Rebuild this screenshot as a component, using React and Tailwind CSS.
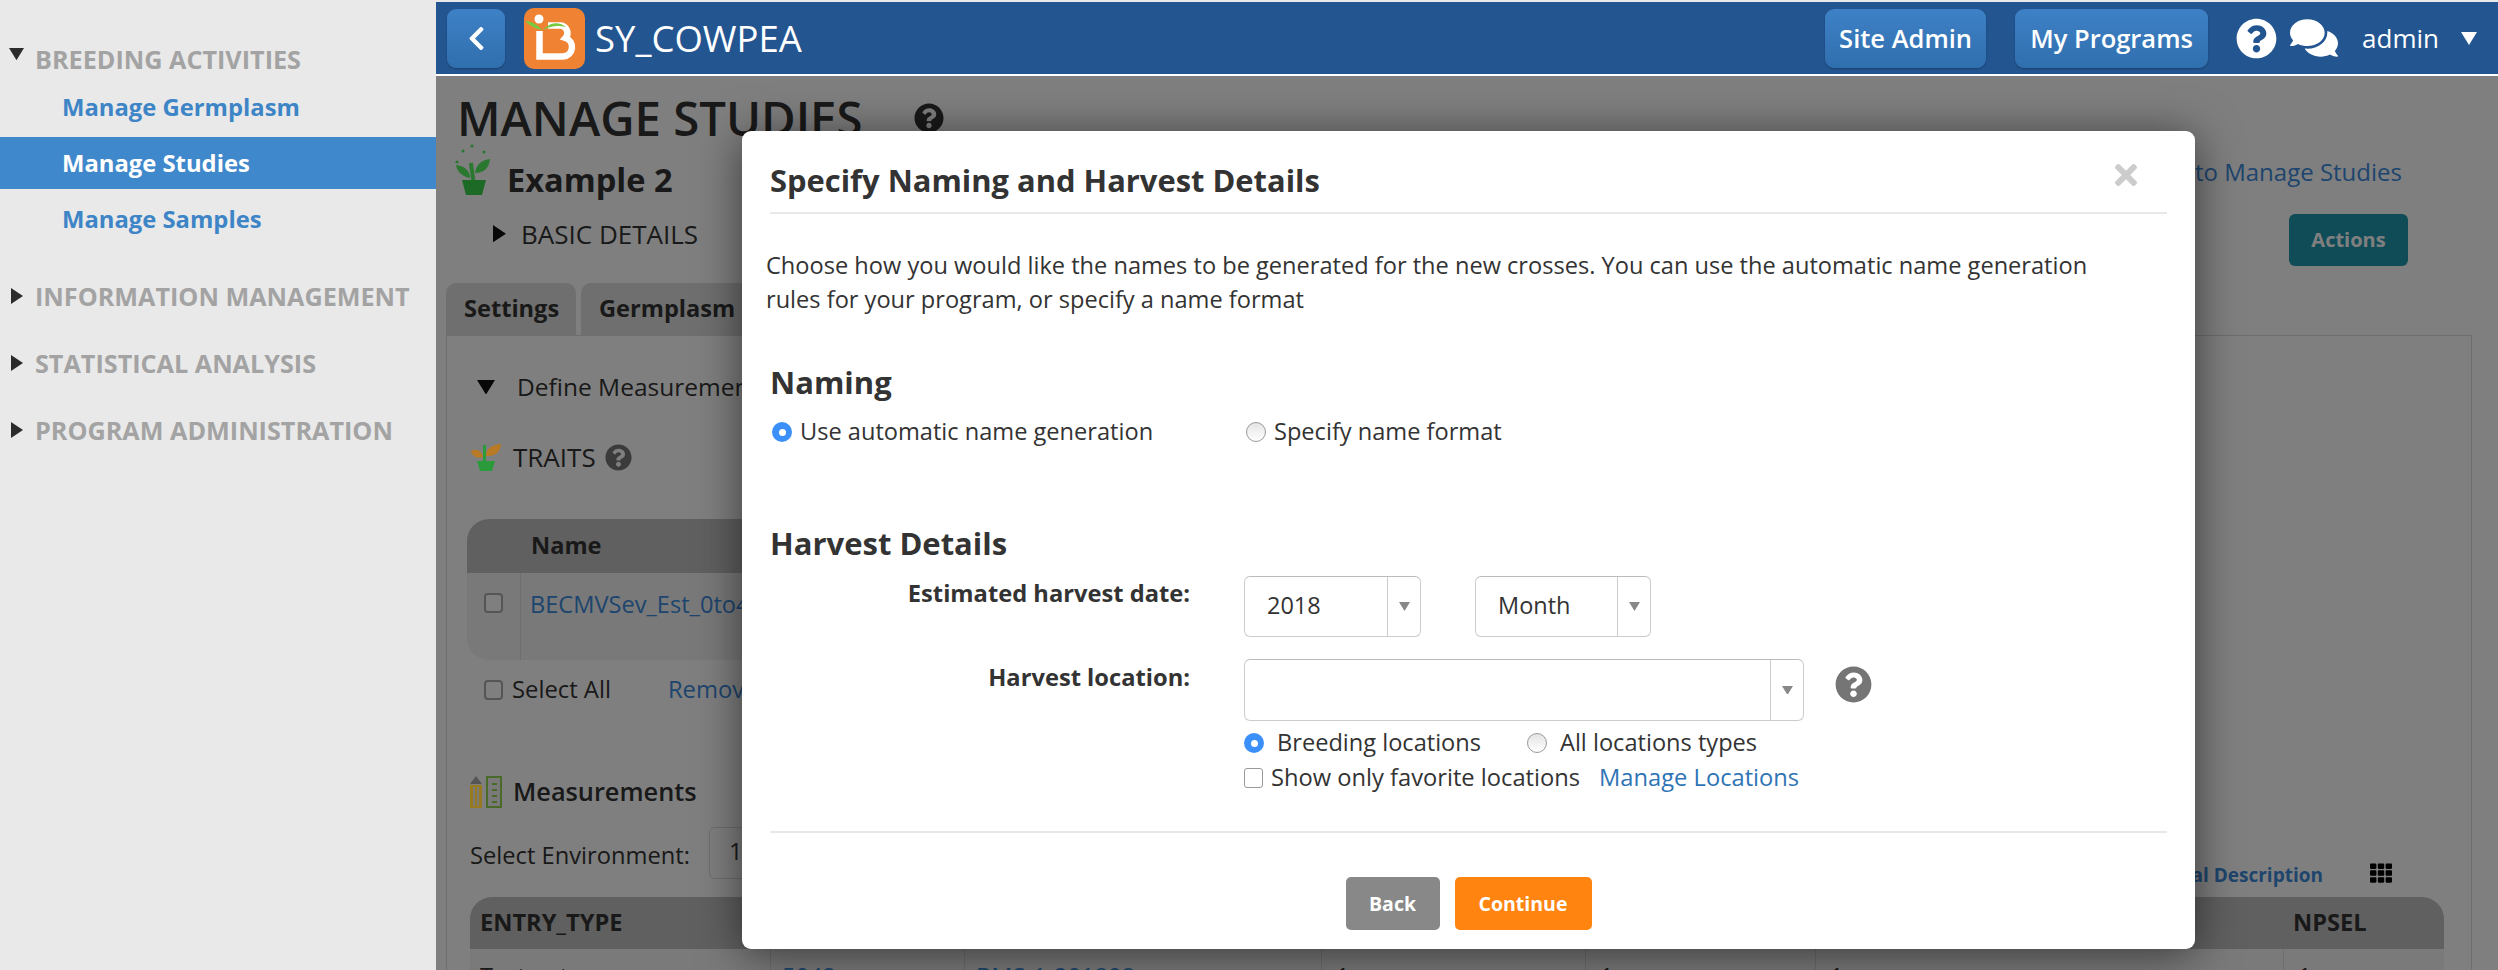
import { FaChevronLeft, FaComments, FaQuestionCircle, FaTh, FaTimes } from "react-icons/fa";

// ----------------------------------------------------------------------

const FONT = "font-['Open_Sans',sans-serif]";

function Triangle({ dir = "right", className = "" }) {
  const points = dir === "right" ? "0,0 12,8 0,16" : "0,0 16,0 8,13";
  const box = dir === "right" ? "0 0 12 16" : "0 0 16 13";
  return (
    <svg viewBox={box} className={className} fill="currentColor">
      <polygon points={points} />
    </svg>
  );
}

function NavHeading({ open, children }) {
  return (
    <div className="relative h-[34px] pl-[35px] text-[25.2px] leading-[34px] font-bold text-[#a3a3a3] whitespace-nowrap">
      {open ? (
        <Triangle dir="down" className="absolute left-[9px] top-[6px] w-[15px] text-[#2b2b2b]" />
      ) : (
        <Triangle className="absolute left-[11px] top-[9px] w-[12px] text-[#2b2b2b]" />
      )}
      {children}
    </div>
  );
}

function NavItem({ active, children }) {
  return (
    <div
      className={
        "h-[52px] pl-[62px] text-[23.8px] leading-[53px] font-bold " +
        (active ? "bg-[#3f88cc] text-white" : "text-[#3d85c6]")
      }
    >
      {children}
    </div>
  );
}

function Sidebar() {
  return (
    <aside className="w-[436px] shrink-0 bg-[#e9e9e9] pt-[42px]">
      <NavHeading open>BREEDING ACTIVITIES</NavHeading>
      <div className="mt-[5px] flex flex-col gap-[4px]">
        <NavItem>Manage Germplasm</NavItem>
        <NavItem active>Manage Studies</NavItem>
        <NavItem>Manage Samples</NavItem>
      </div>
      <div className="mt-[34px] flex flex-col gap-[33px]">
        <NavHeading>INFORMATION MANAGEMENT</NavHeading>
        <NavHeading>STATISTICAL ANALYSIS</NavHeading>
        <NavHeading>PROGRAM ADMINISTRATION</NavHeading>
      </div>
    </aside>
  );
}

function BmsLogo() {
  return (
    <svg viewBox="0 0 61 61" className="h-[61px] w-[61px] shrink-0">
      <rect width="61" height="61" rx="10" fill="#f08233" />
      <circle cx="15" cy="11" r="4.5" fill="#fff" />
      <path
        d="M15.5 23 V48.5 H39 a9.5 9.5 0 0 0 2.5 -18.5 a7.5 7.5 0 0 0 -5 -12.5 H24"
        fill="none"
        stroke="#fff"
        strokeWidth="6.5"
      />
      <path d="M1 13 C8 13 14 17 18 22 C12 21 6 18 1 13 Z" fill="#7ac943" />
      <path d="M19 22 C27 13 36 14 42 19 C34 17 27 18 19 22 Z" fill="#7ac943" />
    </svg>
  );
}

function TopButton({ className = "", children }) {
  return (
    <div
      className={
        "flex h-[59px] items-center justify-center rounded-[9px] bg-gradient-to-b from-[#3e81c6] to-[#306fae] text-white shadow-[0_1px_2px_rgba(0,0,0,0.25)] " +
        className
      }
    >
      {children}
    </div>
  );
}

function TopBar() {
  return (
    <header className="flex h-[72px] shrink-0 items-center bg-[#235591] pl-[11px] text-white">
      <TopButton className="w-[58px]">
        <FaChevronLeft className="text-[27px]" />
      </TopButton>
      <div className="ml-[19px]">
        <BmsLogo />
      </div>
      <span className="ml-[10px] text-[36.5px] leading-none">SY_COWPEA</span>
      <TopButton className="ml-auto w-[161px] text-[25.5px] font-semibold">Site Admin</TopButton>
      <TopButton className="ml-[29px] w-[193px] text-[25.5px] font-semibold">My Programs</TopButton>
      <FaQuestionCircle className="ml-[28px] text-[41px]" />
      <FaComments className="ml-[13px] text-[48px]" />
      <span className="ml-[24px] text-[26px]">admin</span>
      <Triangle dir="down" className="ml-[22px] mr-[21px] w-[16px] text-white" />
    </header>
  );
}

function PlantIcon() {
  return (
    <svg viewBox="0 0 35 51" className="h-[51px] w-[35px] shrink-0" fill="#55f060">
      <circle cx="17" cy="2" r="1.6" />
      <circle cx="8" cy="7" r="1.6" />
      <circle cx="29" cy="8" r="1.6" />
      <circle cx="2" cy="18" r="1.6" />
      <rect x="15" y="19" width="4" height="17" transform="rotate(-8 17 27)" />
      <path d="M20 29 C21 20 27 16 35 15 C34 24 29 29 20 29 Z" />
      <path d="M15 34 C8 33 2 28 1 21 C9 22 15 26 15 34 Z" />
      <path d="M7 36 H31 L27 51 H11 Z" fill="#3ad44c" />
    </svg>
  );
}

// these two keep their strong colours through the dimmed backdrop
function TraitIcon() {
  return (
    <svg viewBox="0 0 30 27" className="relative z-10 h-[27px] w-[30px] shrink-0">
      <rect x="12" y="1" width="3" height="17" fill="#2a9a3a" />
      <path d="M12 13 C6 15 1 12 0 7 C5 4 11 7 12 13 Z" fill="#b87a25" />
      <path d="M15 12 C14 5 22 0 30 0 C30 6 25 13 15 12 Z" fill="#b87a25" />
      <path d="M6 17 H24 L21 27 H9 Z" fill="#2a9a3a" />
    </svg>
  );
}

function MeasureIcon() {
  return (
    <svg viewBox="0 0 32 32" className="relative z-10 h-[32px] w-[32px] shrink-0">
      <polygon points="6,0 12,8 0,8" fill="#555" />
      <rect x="0" y="9" width="12" height="23" fill="#97791f" />
      <rect x="3" y="11" width="2" height="19" fill="#7a7a7a" />
      <rect x="7" y="11" width="2" height="19" fill="#7a7a7a" />
      <rect x="17" y="1" width="14" height="30" fill="#7a7a7a" stroke="#4a6a2a" strokeWidth="2" />
      <rect x="22" y="7" width="5" height="2" fill="#4a6a2a" />
      <rect x="22" y="13" width="5" height="2" fill="#4a6a2a" />
      <rect x="22" y="19" width="5" height="2" fill="#4a6a2a" />
      <rect x="22" y="25" width="5" height="2" fill="#4a6a2a" />
    </svg>
  );
}

function PageCheckbox() {
  return <span className="inline-block h-[20px] w-[19px] shrink-0 rounded-[4px] border-2 border-[#aaa] bg-white" />;
}

const columns = [
  { label: "ENTRY_TYPE", value: "Test entry", pad: "pl-[10px]" },
  { label: "", value: "5042", pad: "pl-[11px]", link: true },
  { label: "", value: "BMS-1-201808", pad: "pl-[11px]", link: true },
  { label: "", value: "1", pad: "pl-[14px]" },
  { label: "", value: "1", pad: "pl-[14px]" },
  { label: "", value: "1", pad: "pl-[14px]" },
  { label: "NPSEL", value: "1", pad: "pl-[14px]" },
];

function Background() {
  return (
    <div className="relative flex min-h-0 flex-1 flex-col overflow-hidden bg-white text-[#333]">
      <div className="flex h-[68px] shrink-0 items-start pl-[21px] pt-[19px]">
        <h1 className="text-[47.3px] leading-[46px] font-semibold text-[#333]">MANAGE STUDIES</h1>
        <FaQuestionCircle className="ml-[51px] mt-[8px] text-[30px] text-[#333]" />
      </div>

      <div className="flex h-[52px] shrink-0 items-start justify-between pl-[19px] pr-[96px]">
        <div className="flex items-start">
          <PlantIcon />
          <span className="ml-[17px] mt-[16px] text-[32.6px] leading-[40px] font-bold">Example 2</span>
        </div>
        <a className="mt-[12px] text-[24px] leading-[32px] text-[#3d8adb]">Back to Manage Studies</a>
      </div>

      <div className="flex h-[87px] shrink-0 items-start justify-between pl-[57px] pr-[90px]">
        <div className="mt-[22px] flex h-[32px] items-center">
          <Triangle className="w-[13px] text-[#111]" />
          <span className="ml-[15px] text-[26px] font-medium">BASIC DETAILS</span>
        </div>
        <div className="mt-[18px] flex h-[52px] w-[119px] items-center justify-center rounded-[6px] bg-[#1e98b0] text-[20px] font-bold text-white">
          Actions
        </div>
      </div>

      <div className="flex h-[52px] shrink-0 gap-[5px] pl-[10px]">
        <div className="flex w-[130px] items-center rounded-t-[10px] bg-[#dedede] pl-[18px] text-[23.6px] font-bold">Settings</div>
        <div className="flex w-[172px] items-center rounded-t-[10px] bg-[#dedede] pl-[18px] text-[23.6px] font-bold">Germplasm</div>
      </div>

      <div className="ml-[10px] flex w-[2026px] min-h-0 flex-1 flex-col border-x border-t border-[#ddd]">
        <div className="mt-[35px] flex h-[32px] shrink-0 items-center pl-[30px]">
          <Triangle dir="down" className="w-[18px] text-[#111]" />
          <span className="ml-[22px] text-[24.5px] font-medium">Define Measurements</span>
        </div>

        <div className="mt-[40px] flex h-[28px] shrink-0 items-center pl-[24px]">
          <TraitIcon />
          <span className="ml-[12px] text-[26px] font-medium">TRAITS</span>
          <FaQuestionCircle className="ml-[9px] text-[27px] text-[#777]" />
        </div>

        <div className="ml-[20px] mt-[48px] w-[1500px] shrink-0 overflow-hidden rounded-[22px]">
          <div className="flex h-[54px] items-center bg-[#c0c0c0] pl-[64px] text-[23.6px] font-bold">Name</div>
          <div className="flex h-[87px] bg-[#f3f3f3] text-[23.6px]">
            <div className="flex w-[54px] justify-center border-r border-[#ddd] pt-[20px]">
              <PageCheckbox />
            </div>
            <a className="pl-[9px] pt-[14px] leading-[34px] text-[#3d8adb]">BECMVSev_Est_0to4</a>
          </div>
        </div>

        <div className="ml-[37px] mt-[14px] flex h-[32px] shrink-0 items-center text-[23.8px]">
          <PageCheckbox />
          <span className="ml-[9px]">Select All</span>
          <a className="ml-[57px] text-[#3d8adb]">Remove</a>
        </div>

        <div className="ml-[23px] mt-[70px] flex h-[32px] shrink-0 items-center">
          <MeasureIcon />
          <span className="ml-[11px] text-[25.3px] font-semibold">Measurements</span>
        </div>

        <div className="mt-[19px] flex h-[52px] shrink-0 items-center pl-[23px] pr-[79px] text-[23.7px]">
          <span className="mt-[6px]">Select Environment:</span>
          <span className="ml-[19px] flex h-[52px] w-[400px] rounded-[6px] border border-[#ddd] pl-[19px] pt-[6px]">1</span>
          <a className="ml-auto mt-[44px] text-[19px] leading-none font-bold text-[#3d8adb]">Additional Description</a>
          <FaTh className="ml-[47px] mt-[40px] text-[22px] text-black" />
        </div>

        <div className="ml-[23px] mt-[18px] w-[1974px] shrink-0">
          <div className="grid h-[52px] grid-cols-[300px_194px_357px_264px_230px_468px_161px] items-center rounded-t-[22px] bg-[#c0c0c0] text-[23.6px] font-bold">
            {columns.map((c, i) => (
              <span key={i} className="pl-[10px]">{c.label}</span>
            ))}
          </div>
          <div className="grid h-[60px] grid-cols-[300px_194px_357px_264px_230px_468px_161px] bg-[#f5f5f5] text-[23.6px] leading-[34px]">
            {columns.map((c, i) => (
              <span
                key={i}
                className={"pt-[10px] " + c.pad + (i > 0 ? " border-l border-[#ddd]" : "") + (c.link ? " text-[#3d8adb]" : "")}
              >
                {c.value}
              </span>
            ))}
          </div>
        </div>
      </div>

      <div className="absolute inset-0 bg-black/50" />
    </div>
  );
}

function SelectBox({ value, className = "" }) {
  return (
    <div className={"flex rounded-[6px] border border-[#ccc] border-t-[#bbb] bg-white " + className}>
      <span className="flex-1 pl-[22px] text-[23.5px] leading-[56px] text-[#333]">{value}</span>
      <span className="flex w-[33px] items-center justify-center border-l border-[#ccc]">
        <Triangle dir="down" className="w-[11px] text-[#888]" />
      </span>
    </div>
  );
}

function Radio({ checked }) {
  return checked ? (
    <span className="flex h-[20px] w-[20px] shrink-0 items-center justify-center rounded-full bg-[#3a90f8]">
      <span className="h-[7px] w-[7px] rounded-full bg-white" />
    </span>
  ) : (
    <span className="h-[20px] w-[20px] shrink-0 rounded-full border border-[#999] bg-gradient-to-b from-[#e4e4e4] to-white" />
  );
}

function Modal() {
  return (
    <div className="absolute left-[742px] top-[131px] flex h-[818px] w-[1453px] flex-col rounded-[9px] bg-white px-[28px] text-[#333] shadow-[0_5px_45px_rgba(0,0,0,0.55)]">
      <div className="relative h-[83px] shrink-0 border-b-2 border-[#e8e8e8] pt-[29px]">
        <h3 className="text-[30.9px] leading-[40px] font-bold">Specify Naming and Harvest Details</h3>
        <FaTimes className="absolute right-[25px] top-[28px] text-[32px] text-[#ccc]" />
      </div>

      <p className="-ml-[4px] mt-[34px] text-[23.6px] leading-[34px]">
        Choose how you would like the names to be generated for the new crosses. You can use the automatic name generation
        <br />
        rules for your program, or specify a name format
      </p>

      <h4 className="mt-[46px] text-[31px] leading-[40px] font-bold">Naming</h4>
      <div className="mt-[13px] flex h-[34px] items-center text-[23.6px]">
        <span className="ml-[2px]"><Radio checked /></span>
        <span className="ml-[8px] w-[446px]">Use automatic name generation</span>
        <Radio />
        <span className="ml-[8px]">Specify name format</span>
      </div>

      <h4 className="mt-[74px] text-[31px] leading-[40px] font-bold">Harvest Details</h4>

      <div className="mt-[13px] flex">
        <label className="w-[420px] text-right text-[23.7px] leading-[34px] font-bold">Estimated harvest date:</label>
        <div className="ml-[54px] flex gap-[54px]">
          <SelectBox value="2018" className="h-[61px] w-[177px]" />
          <SelectBox value="Month" className="h-[61px] w-[176px]" />
        </div>
      </div>

      <div className="mt-[22px] flex">
        <label className="mt-[1px] w-[420px] text-right text-[23.7px] leading-[34px] font-bold">Harvest location:</label>
        <div className="ml-[54px] flex flex-col">
          <div className="flex items-start">
            <SelectBox value="" className="h-[62px] w-[560px]" />
            <FaQuestionCircle className="ml-[31px] mt-[7px] text-[37px] text-[#757575]" />
          </div>
          <div className="mt-[7px] flex h-[30px] items-center text-[23.6px]">
            <Radio checked />
            <span className="ml-[13px] w-[250px]">Breeding locations</span>
            <Radio />
            <span className="ml-[13px]">All locations types</span>
          </div>
          <div className="mt-[5px] flex h-[30px] items-center text-[23.7px]">
            <span className="h-[20px] w-[19px] rounded-[3px] border border-[#999] bg-white" />
            <span className="ml-[8px]">Show only favorite locations</span>
            <a className="ml-[19px] text-[#2f74b5]">Manage Locations</a>
          </div>
        </div>
      </div>

      <div className="mt-[38px] border-t-2 border-[#e8e8e8]" />

      <div className="mt-[44px] flex justify-center gap-[15px] text-[19.5px] font-bold text-white">
        <button className="h-[53px] w-[94px] rounded-[5px] bg-[#888]">Back</button>
        <button className="h-[53px] w-[137px] rounded-[5px] bg-[#ff8410]">Continue</button>
      </div>
    </div>
  );
}

export default function App() {
  return (
    <div className={"relative flex h-[970px] w-[2498px] overflow-hidden bg-[#e9e9e9] " + FONT}>
      <Sidebar />
      <div className="flex min-w-0 flex-1 flex-col pt-[2px]">
        <TopBar />
        <div className="h-[2px] shrink-0 bg-white" />
        <Background />
      </div>
      <Modal />
    </div>
  );
}
